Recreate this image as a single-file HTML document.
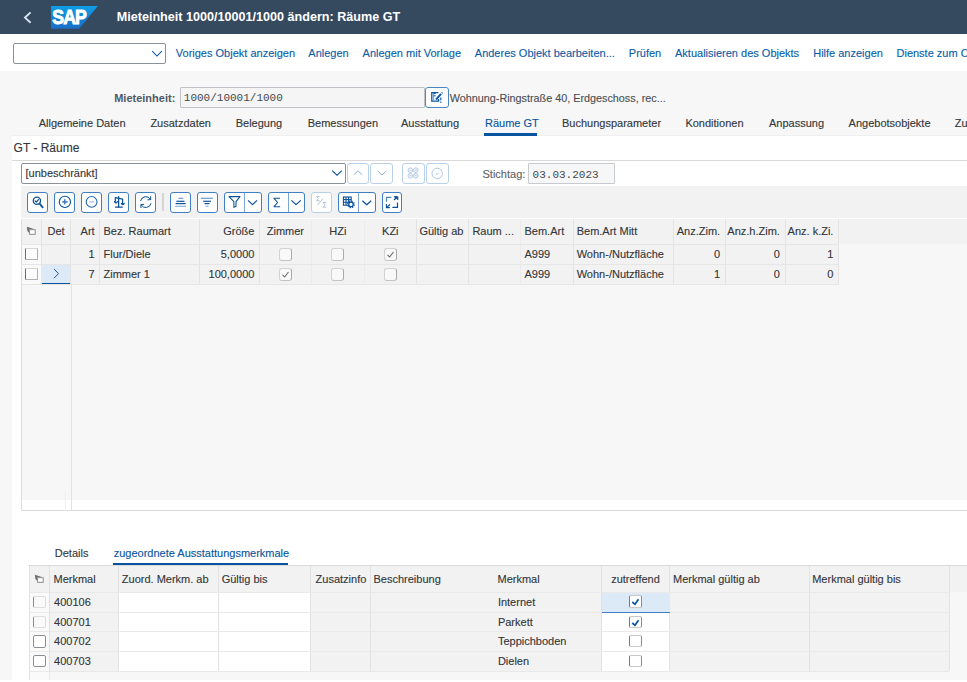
<!DOCTYPE html><html><head><meta charset="utf-8"><style>html,body{margin:0;padding:0;width:967px;height:682px;overflow:hidden;position:relative}</style></head><body><div style="position:absolute;left:0px;top:0px;width:967px;height:682px;background:#f7f7f7"></div>
<div style="position:absolute;left:0px;top:0px;width:967px;height:34px;background:#354a5f"></div>
<svg style="position:absolute;left:22px;top:10px;" width="12" height="16" viewBox="0 0 12 16"><polyline points="8.6,2.4 3,7.6 8.6,12.8" fill="none" stroke="#d8e6f3" stroke-width="1.9"/></svg>
<svg style="position:absolute;left:51px;top:6px;" width="48" height="23" viewBox="0 0 48 23"><defs><linearGradient id="g" x1="0" y1="0" x2="0" y2="1"><stop offset="0" stop-color="#0d9fe6"/><stop offset="1" stop-color="#1b6cc6"/></linearGradient></defs><polygon points="0,0 46.8,0 28.2,22.8 0,22.8" fill="url(#g)"/><text x="1.3" y="18.2" textLength="33.6" lengthAdjust="spacingAndGlyphs" font-family="Liberation Sans" font-weight="700" font-size="19.5" fill="#fff" stroke="#fff" stroke-width="0.9" letter-spacing="-1">SAP</text></svg>
<div style="position:absolute;left:116.70px;top:10.73px;font:700 12.6px/12.6px 'Liberation Sans', sans-serif;color:#fff;white-space:nowrap;">Mieteinheit 1000/10001/1000 ändern: Räume GT</div>
<div style="position:absolute;left:0px;top:34px;width:967px;height:37px;background:#fff"></div>
<div style="position:absolute;left:13px;top:43px;width:153px;height:21px;border:1px solid #89919a;border-radius:2px;background:#fff;box-sizing:border-box"></div>
<svg style="position:absolute;left:151px;top:50px;" width="12" height="8" viewBox="0 0 12 8"><polyline points="1.2,1.2 6,6 10.8,1.2" fill="none" stroke="#0854a0" stroke-width="1.05"/></svg>
<div style="position:absolute;left:175.80px;top:47.69px;font:400 11px/11px 'Liberation Sans', sans-serif;color:#0a5ca8;white-space:nowrap;-webkit-text-stroke:0.12px currentColor;">Voriges Objekt anzeigen</div>
<div style="position:absolute;left:308.30px;top:47.69px;font:400 11px/11px 'Liberation Sans', sans-serif;color:#0a5ca8;white-space:nowrap;-webkit-text-stroke:0.12px currentColor;">Anlegen</div>
<div style="position:absolute;left:362.60px;top:47.69px;font:400 11px/11px 'Liberation Sans', sans-serif;color:#0a5ca8;white-space:nowrap;-webkit-text-stroke:0.12px currentColor;">Anlegen mit Vorlage</div>
<div style="position:absolute;left:474.80px;top:47.69px;font:400 11px/11px 'Liberation Sans', sans-serif;color:#0a5ca8;white-space:nowrap;-webkit-text-stroke:0.12px currentColor;">Anderes Objekt bearbeiten...</div>
<div style="position:absolute;left:628.80px;top:47.69px;font:400 11px/11px 'Liberation Sans', sans-serif;color:#0a5ca8;white-space:nowrap;-webkit-text-stroke:0.12px currentColor;">Prüfen</div>
<div style="position:absolute;left:675.00px;top:47.69px;font:400 11px/11px 'Liberation Sans', sans-serif;color:#0a5ca8;white-space:nowrap;-webkit-text-stroke:0.12px currentColor;">Aktualisieren des Objekts</div>
<div style="position:absolute;left:813.20px;top:47.69px;font:400 11px/11px 'Liberation Sans', sans-serif;color:#0a5ca8;white-space:nowrap;-webkit-text-stroke:0.12px currentColor;">Hilfe anzeigen</div>
<div style="position:absolute;left:896.50px;top:47.69px;font:400 11px/11px 'Liberation Sans', sans-serif;color:#0a5ca8;white-space:nowrap;-webkit-text-stroke:0.12px currentColor;">Dienste zum Objekt</div>
<div style="position:absolute;right:791.70px;top:92.59px;font:700 11px/11px 'Liberation Sans', sans-serif;color:#4f5a66;white-space:nowrap;">Mieteinheit:</div>
<div style="position:absolute;left:179.5px;top:87.2px;width:245.5px;height:20.799999999999997px;border:1px solid #bfc3c7;background:#f5f5f5;box-sizing:border-box;border-radius:1px"></div>
<div style="position:absolute;left:183.80px;top:93.07px;font:400 11px/11px 'Liberation Mono', monospace;color:#45494d;white-space:nowrap;">1000/10001/1000</div>
<div style="position:absolute;left:425px;top:87px;width:24px;height:21px;border:1px solid #4a86c8;background:#fff;box-sizing:border-box;border-radius:3px"></div>
<svg style="position:absolute;left:425px;top:87px;" width="24" height="21" viewBox="0 0 24 21"><g fill="none" stroke="#0b57a6" stroke-linecap="butt"><polyline points="13.4,5.6 6.8,5.6 6.8,14.2 13.6,14.2 13.6,12" stroke-width="1.3"/><line x1="8.4" y1="6.5" x2="10.6" y2="6.5" stroke-width="1.1"/><line x1="8.4" y1="8.8" x2="10.6" y2="8.8" stroke-width="1.1"/><line x1="8.6" y1="6" x2="8.6" y2="13" stroke-width="0.9" stroke="#5a8fcc"/><line x1="11" y1="12.6" x2="16" y2="6.8" stroke-width="2"/><line x1="16.6" y1="5.4" x2="17.6" y2="6.4" stroke-width="1.2"/><line x1="15.8" y1="10.4" x2="15.8" y2="13.2" stroke-width="1.2"/><line x1="15.8" y1="14.6" x2="15.8" y2="15.8" stroke-width="1.3"/></g></svg>
<div style="position:absolute;left:449.80px;top:92.56px;font:400 10.8px/10.8px 'Liberation Sans', sans-serif;color:#4a4e52;white-space:nowrap;-webkit-text-stroke:0.12px currentColor;">Wohnung-Ringstraße 40, Erdgeschoss, rec...</div>
<div style="position:absolute;left:38.70px;top:117.99px;font:400 11px/11px 'Liberation Sans', sans-serif;color:#32363a;white-space:nowrap;-webkit-text-stroke:0.12px currentColor;">Allgemeine Daten</div>
<div style="position:absolute;left:150.40px;top:117.99px;font:400 11px/11px 'Liberation Sans', sans-serif;color:#32363a;white-space:nowrap;-webkit-text-stroke:0.12px currentColor;">Zusatzdaten</div>
<div style="position:absolute;left:235.70px;top:117.99px;font:400 11px/11px 'Liberation Sans', sans-serif;color:#32363a;white-space:nowrap;-webkit-text-stroke:0.12px currentColor;">Belegung</div>
<div style="position:absolute;left:307.70px;top:117.99px;font:400 11px/11px 'Liberation Sans', sans-serif;color:#32363a;white-space:nowrap;-webkit-text-stroke:0.12px currentColor;">Bemessungen</div>
<div style="position:absolute;left:401.00px;top:117.99px;font:400 11px/11px 'Liberation Sans', sans-serif;color:#32363a;white-space:nowrap;-webkit-text-stroke:0.12px currentColor;">Ausstattung</div>
<div style="position:absolute;left:485.00px;top:117.99px;font:400 11px/11px 'Liberation Sans', sans-serif;color:#0854a0;white-space:nowrap;-webkit-text-stroke:0.12px currentColor;">Räume GT</div>
<div style="position:absolute;left:562.00px;top:117.99px;font:400 11px/11px 'Liberation Sans', sans-serif;color:#32363a;white-space:nowrap;-webkit-text-stroke:0.12px currentColor;">Buchungsparameter</div>
<div style="position:absolute;left:685.40px;top:117.99px;font:400 11px/11px 'Liberation Sans', sans-serif;color:#32363a;white-space:nowrap;-webkit-text-stroke:0.12px currentColor;">Konditionen</div>
<div style="position:absolute;left:769.00px;top:117.99px;font:400 11px/11px 'Liberation Sans', sans-serif;color:#32363a;white-space:nowrap;-webkit-text-stroke:0.12px currentColor;">Anpassung</div>
<div style="position:absolute;left:848.60px;top:117.99px;font:400 11px/11px 'Liberation Sans', sans-serif;color:#32363a;white-space:nowrap;-webkit-text-stroke:0.12px currentColor;">Angebotsobjekte</div>
<div style="position:absolute;left:954.80px;top:117.99px;font:400 11px/11px 'Liberation Sans', sans-serif;color:#32363a;white-space:nowrap;-webkit-text-stroke:0.12px currentColor;">Zusatz</div>
<div style="position:absolute;left:12.4px;top:134.5px;width:954.6px;height:1.0px;background:#efefef"></div>
<div style="position:absolute;left:484px;top:133px;width:53px;height:2.5px;background:#0854a0"></div>
<div style="position:absolute;left:12.4px;top:135.5px;width:954.6px;height:546.5px;background:#fff"></div>
<div style="position:absolute;left:13.60px;top:142.14px;font:400 12px/12px 'Liberation Sans', sans-serif;color:#32363a;white-space:nowrap;-webkit-text-stroke:0.12px currentColor;">GT - Räume</div>
<div style="position:absolute;left:12.4px;top:160px;width:954.6px;height:1px;background:#d9d9d9"></div>
<div style="position:absolute;left:21.2px;top:163px;width:324.8px;height:20.5px;border:1px solid #89919a;border-radius:2px;background:#fff;box-sizing:border-box"></div>
<div style="position:absolute;left:25.50px;top:168.09px;font:400 11px/11px 'Liberation Sans', sans-serif;color:#32363a;white-space:nowrap;-webkit-text-stroke:0.12px currentColor;">[unbeschränkt]</div>
<svg style="position:absolute;left:331px;top:169px;" width="12" height="8" viewBox="0 0 12 8"><polyline points="1.2,1.6 6,6.2 10.8,1.6" fill="none" stroke="#0854a0" stroke-width="1.05"/></svg>
<div style="position:absolute;left:346.8px;top:163px;width:22.19999999999999px;height:21px;border:1px solid #b8d0ea;border-radius:3px;background:#fff;box-sizing:border-box"></div>
<div style="position:absolute;left:370px;top:163px;width:23px;height:21px;border:1px solid #b8d0ea;border-radius:3px;background:#fff;box-sizing:border-box"></div>
<div style="position:absolute;left:401.5px;top:163px;width:23.0px;height:21px;border:1px solid #b8d0ea;border-radius:3px;background:#fff;box-sizing:border-box"></div>
<div style="position:absolute;left:426px;top:163px;width:22.600000000000023px;height:21px;border:1px solid #b8d0ea;border-radius:3px;background:#fff;box-sizing:border-box"></div>
<svg style="position:absolute;left:352px;top:168px;" width="12" height="10" viewBox="0 0 12 10"><polyline points="1.8,6.8 6,2.8 10.2,6.8" fill="none" stroke="#8fb2d8" stroke-width="1"/></svg>
<svg style="position:absolute;left:375.5px;top:168px;" width="12" height="10" viewBox="0 0 12 10"><polyline points="1.8,3 6,7 10.2,3" fill="none" stroke="#8fb2d8" stroke-width="1"/></svg>
<svg style="position:absolute;left:406px;top:166px;" width="14" height="14" viewBox="0 0 14 14"><g fill="none" stroke="#a9c1dc" stroke-width="0.9"><circle cx="4.3" cy="4.2" r="2.3"/><circle cx="9.8" cy="4.2" r="2.3"/><circle cx="4.3" cy="9.8" r="2.3"/><circle cx="9.8" cy="9.8" r="2.3"/><path d="M3.2,4.2h2.2M8.7,4.2h2.2M3.2,9.8h2.2M8.7,9.8h2.2"/></g></svg>
<svg style="position:absolute;left:430px;top:166px;" width="14" height="14" viewBox="0 0 14 14"><g fill="none" stroke="#a9c1dc" stroke-width="0.9"><circle cx="7.2" cy="7.4" r="5.2"/><path d="M6,7.6 l1.2,1 l1.4,-1.6"/></g></svg>
<div style="position:absolute;left:482.50px;top:168.99px;font:400 11px/11px 'Liberation Sans', sans-serif;color:#5f6366;white-space:nowrap;-webkit-text-stroke:0.12px currentColor;">Stichtag:</div>
<div style="position:absolute;left:528.3px;top:163.3px;width:86.70000000000005px;height:20.399999999999977px;border:1px solid #c6cbd0;background:#f7f7f7;box-sizing:border-box;border-radius:1px"></div>
<div style="position:absolute;left:532.60px;top:169.87px;font:400 11px/11px 'Liberation Mono', monospace;color:#45494d;white-space:nowrap;">03.03.2023</div>
<div style="position:absolute;left:21.2px;top:185.5px;width:945.8px;height:33.0px;background:#f2f2f2"></div>
<div style="position:absolute;left:27.3px;top:192.1px;width:20.7px;height:20.5px;border:1px solid #3f7fc4;border-radius:3px;background:#fff;box-sizing:border-box"></div>
<div style="position:absolute;left:54.1px;top:192.1px;width:20.6px;height:20.5px;border:1px solid #3f7fc4;border-radius:3px;background:#fff;box-sizing:border-box"></div>
<div style="position:absolute;left:81px;top:192.1px;width:20.700000000000003px;height:20.5px;border:1px solid #3f7fc4;border-radius:3px;background:#fff;box-sizing:border-box"></div>
<div style="position:absolute;left:108px;top:192.1px;width:20.599999999999994px;height:20.5px;border:1px solid #3f7fc4;border-radius:3px;background:#fff;box-sizing:border-box"></div>
<div style="position:absolute;left:135.1px;top:192.1px;width:20.599999999999994px;height:20.5px;border:1px solid #3f7fc4;border-radius:3px;background:#fff;box-sizing:border-box"></div>
<div style="position:absolute;left:170.1px;top:192.1px;width:20.599999999999994px;height:20.5px;border:1px solid #3f7fc4;border-radius:3px;background:#fff;box-sizing:border-box"></div>
<div style="position:absolute;left:197.2px;top:192.1px;width:20.5px;height:20.5px;border:1px solid #3f7fc4;border-radius:3px;background:#fff;box-sizing:border-box"></div>
<div style="position:absolute;left:224.1px;top:192.1px;width:37.50000000000003px;height:20.5px;border:1px solid #3f7fc4;border-radius:3px;background:#fff;box-sizing:border-box"></div>
<div style="position:absolute;left:267.8px;top:192.1px;width:37.19999999999999px;height:20.5px;border:1px solid #3f7fc4;border-radius:3px;background:#fff;box-sizing:border-box"></div>
<div style="position:absolute;left:338px;top:192.1px;width:37.69999999999999px;height:20.5px;border:1px solid #3f7fc4;border-radius:3px;background:#fff;box-sizing:border-box"></div>
<div style="position:absolute;left:381.9px;top:192.1px;width:20.5px;height:20.5px;border:1px solid #3f7fc4;border-radius:3px;background:#fff;box-sizing:border-box"></div>
<div style="position:absolute;left:311.2px;top:192.1px;width:20.600000000000023px;height:20.5px;border:1px solid #b8d0ea;border-radius:3px;background:#fff;box-sizing:border-box"></div>
<div style="position:absolute;left:244.0px;top:193px;width:1.0px;height:19px;background:#7aa5d6"></div>
<div style="position:absolute;left:287.9px;top:193px;width:1.0px;height:19px;background:#7aa5d6"></div>
<div style="position:absolute;left:358.1px;top:193px;width:1.0px;height:19px;background:#7aa5d6"></div>
<div style="position:absolute;left:162.3px;top:193px;width:1.6999999999999886px;height:18px;background:#d5d5d5"></div>
<svg style="position:absolute;left:0px;top:0px;pointer-events:none;z-index:5" width="967" height="682" viewBox="0 0 967 682">
<g fill="none" stroke="#0b5299" stroke-width="1.3" stroke-linecap="round" stroke-linejoin="round">
<circle cx="36.9" cy="200.8" r="3.6"/>
<line x1="39.6" y1="203.6" x2="42.7" y2="207.3" stroke-width="1.8"/>
<polyline points="35.2,201 36.4,202.2 38.4,199.6" stroke-width="1.2"/>
</g>
<g fill="none" stroke="#0b5299" stroke-width="1.1">
<circle cx="64.9" cy="201.9" r="5.6"/>
<line x1="62.3" y1="201.9" x2="67.6" y2="201.9" stroke-width="1.6" stroke="#3d7cc0"/>
<line x1="64.7" y1="199.2" x2="64.7" y2="204.4" stroke-width="1.6" stroke="#3d7cc0"/>
<circle cx="91.6" cy="201.9" r="5.4" stroke="#1f68b3"/>
<line x1="89.2" y1="201.9" x2="94" y2="201.9" stroke="#8fb0d6" stroke-width="1"/>
</g>
<g fill="none" stroke="#0b5299" stroke-width="1.3" stroke-linecap="round">
<line x1="118.6" y1="196.6" x2="118.6" y2="207"/>
<line x1="115.6" y1="207.2" x2="122.2" y2="207.2"/>
<line x1="115.4" y1="197.6" x2="122.6" y2="199.2"/>
<path d="M115.3,198.2 L115.3,201.8 M114.6,201.6 Q116,204 117.4,201.6" stroke-width="1.2"/>
<path d="M122.6,199.6 L122.6,203.6 M121.4,203.4 Q122.8,206 124.2,203.4" stroke-width="1.2"/>
</g>
<g fill="none" stroke="#0b5299" stroke-width="1.0" stroke-linecap="round">
<path d="M140.6,200.6 A5.4,5.4 0 0 1 150.4,199.2"/>
<polyline points="150.6,196.6 150.8,199.6 147.9,199.8"/>
<path d="M151,203.6 A5.4,5.4 0 0 1 141.2,205"/>
<polyline points="141,207.6 140.8,204.6 143.7,204.4"/>
</g>
<g stroke="#0b5299" stroke-width="1.2">
<line x1="178.4" y1="198.3" x2="183.2" y2="198.3" stroke="#6c9bd0"/>
<line x1="176.4" y1="201.3" x2="184.5" y2="201.3"/>
<line x1="175.6" y1="203.6" x2="185.6" y2="203.6"/>
<line x1="175" y1="206.3" x2="186" y2="206.3" stroke="#8db1da"/>
<line x1="200.9" y1="198.3" x2="213" y2="198.3" stroke="#6c9bd0"/>
<line x1="203.2" y1="201.3" x2="211" y2="201.3"/>
<line x1="204.5" y1="203.6" x2="209.5" y2="203.6"/>
<line x1="205.5" y1="206.3" x2="208.5" y2="206.3" stroke="#8db1da"/>
</g>
<g fill="none" stroke="#0b5299" stroke-width="1.05" stroke-linejoin="round">
<path d="M229,196.6 L240,196.6 L236,201.6 L236,206.2 L233.9,207.4 L233.9,201.6 Z"/>
<polyline points="248,200.4 252.5,204.6 257,200.4" stroke-width="1.2"/>
<path d="M280,198.3 L274,198.3 L277.6,202.5 L274,206.7 L280.2,206.7"/>
<polyline points="291.4,200.4 296,204.6 300.8,200.4" stroke-width="1.2"/>
<polyline points="362.4,200.8 366.8,204.8 371.2,200.8" stroke-width="1.2"/>
</g>
<g fill="none" stroke="#a8bdd4" stroke-width="0.9">
<polyline points="319.8,196.4 316.6,196.4 318.4,198.6 316.6,200.8 319.8,200.8"/>
<line x1="317.4" y1="205.4" x2="322.8" y2="198.8"/>
<polyline points="326.4,202.6 323.2,202.6 325,204.8 323.2,207.2 326.4,207.2"/>
</g>
<g fill="none" stroke="#0b5299" stroke-width="1.1">
<rect x="343.4" y="197" width="7.8" height="8.2"/>
<line x1="343.4" y1="199.6" x2="351.2" y2="199.6"/>
<line x1="343.4" y1="202.3" x2="349" y2="202.3"/>
<line x1="346" y1="197" x2="346" y2="205.2"/>
<line x1="348.6" y1="197" x2="348.6" y2="202"/>
<circle cx="351" cy="204.4" r="2.2" fill="#fff" stroke-width="1.3"/>
<circle cx="351" cy="204.4" r="3.3" stroke-dasharray="1.3 1.3" stroke-width="1.2"/>
</g>
<g fill="none" stroke="#0b5299" stroke-width="1.2" stroke-linecap="butt">
<polyline points="386.5,201.8 386.5,197.3 391.4,197.3" stroke="#4a86c6"/>
<polyline points="397.5,202.6 397.5,207.4 392.4,207.4"/>
<line x1="394" y1="200" x2="397" y2="197"/>
<polyline points="393.8,196.7 397.8,196.7 397.8,200" fill="#0b5299" stroke-width="1"/>
<line x1="390" y1="204.4" x2="387" y2="207.3"/>
<polyline points="386.4,204 386.4,207.6 389.8,207.6" stroke-width="1.1"/>
</g>
</svg>
<div style="position:absolute;left:21.3px;top:218.5px;width:945.7px;height:25.80000000000001px;background:#f2f2f2"></div>
<div style="position:absolute;left:21.3px;top:244.3px;width:945.7px;height:256.2px;background:#f7f7f7"></div>
<div style="position:absolute;left:21.3px;top:244.3px;width:817.3000000000001px;height:39.89999999999998px;background:#f2f2f2"></div>
<div style="position:absolute;left:21.3px;top:244.3px;width:19.999999999999996px;height:39.89999999999998px;background:#fafafa"></div>
<div style="position:absolute;left:21.3px;top:500.5px;width:945.7px;height:10.5px;background:#fff;border-bottom:1px solid #d9d9d9;box-sizing:border-box"></div>
<div style="position:absolute;left:20.6px;top:218.5px;width:1.0px;height:292.5px;background:#dedede"></div>
<div style="position:absolute;left:40.8px;top:218.5px;width:1.0px;height:65.69999999999999px;background:#e3e3e3"></div>
<div style="position:absolute;left:70.4px;top:218.5px;width:1.0px;height:65.69999999999999px;background:#e3e3e3"></div>
<div style="position:absolute;left:98.9px;top:218.5px;width:1.0px;height:65.69999999999999px;background:#e3e3e3"></div>
<div style="position:absolute;left:198.7px;top:218.5px;width:1.0px;height:65.69999999999999px;background:#e3e3e3"></div>
<div style="position:absolute;left:258.9px;top:218.5px;width:1.0px;height:65.69999999999999px;background:#e3e3e3"></div>
<div style="position:absolute;left:311.0px;top:218.5px;width:1.0px;height:65.69999999999999px;background:#ebebeb"></div>
<div style="position:absolute;left:363.9px;top:218.5px;width:1.0px;height:65.69999999999999px;background:#ebebeb"></div>
<div style="position:absolute;left:415.8px;top:218.5px;width:1.0px;height:65.69999999999999px;background:#e3e3e3"></div>
<div style="position:absolute;left:467.9px;top:218.5px;width:1.0px;height:65.69999999999999px;background:#e3e3e3"></div>
<div style="position:absolute;left:519.5px;top:218.5px;width:1.0px;height:65.69999999999999px;background:#ebebeb"></div>
<div style="position:absolute;left:572.5px;top:218.5px;width:1.0px;height:65.69999999999999px;background:#e3e3e3"></div>
<div style="position:absolute;left:673.0px;top:218.5px;width:1.0px;height:65.69999999999999px;background:#e3e3e3"></div>
<div style="position:absolute;left:724.8px;top:218.5px;width:1.0px;height:65.69999999999999px;background:#e3e3e3"></div>
<div style="position:absolute;left:785.1px;top:218.5px;width:1.0px;height:65.69999999999999px;background:#e3e3e3"></div>
<div style="position:absolute;left:838.1px;top:218.5px;width:1.0px;height:65.69999999999999px;background:#e3e3e3"></div>
<div style="position:absolute;left:21.3px;top:218.0px;width:945.7px;height:1.0px;background:#fff"></div>
<div style="position:absolute;left:70.5px;top:284.2px;width:1.0px;height:226.8px;background:#e2e2e2"></div>
<div style="position:absolute;left:65.3px;top:490px;width:1.0px;height:21px;background:#f0f0f0"></div>
<div style="position:absolute;left:21.3px;top:243.8px;width:817.3000000000001px;height:1.0px;background:#e6e6e6"></div>
<div style="position:absolute;left:21.3px;top:263.9px;width:817.3000000000001px;height:1.0px;background:#e6e6e6"></div>
<div style="position:absolute;left:21.3px;top:283.7px;width:817.3000000000001px;height:1.0px;background:#e6e6e6"></div>
<div style="position:absolute;left:47.50px;top:225.99px;font:400 11px/11px 'Liberation Sans', sans-serif;color:#32363a;white-space:nowrap;-webkit-text-stroke:0.12px currentColor;">Det</div>
<div style="position:absolute;right:872.40px;top:225.99px;font:400 11px/11px 'Liberation Sans', sans-serif;color:#32363a;white-space:nowrap;-webkit-text-stroke:0.12px currentColor;">Art</div>
<div style="position:absolute;left:103.50px;top:225.99px;font:400 11px/11px 'Liberation Sans', sans-serif;color:#32363a;white-space:nowrap;-webkit-text-stroke:0.12px currentColor;">Bez. Raumart</div>
<div style="position:absolute;right:712.60px;top:225.99px;font:400 11px/11px 'Liberation Sans', sans-serif;color:#32363a;white-space:nowrap;-webkit-text-stroke:0.12px currentColor;">Größe</div>
<div style="position:absolute;left:-14.60px;width:600px;text-align:center;top:225.99px;font:400 11px/11px 'Liberation Sans', sans-serif;color:#32363a;white-space:nowrap;-webkit-text-stroke:0.12px currentColor;">Zimmer</div>
<div style="position:absolute;left:37.90px;width:600px;text-align:center;top:225.99px;font:400 11px/11px 'Liberation Sans', sans-serif;color:#32363a;white-space:nowrap;-webkit-text-stroke:0.12px currentColor;">HZi</div>
<div style="position:absolute;left:90.30px;width:600px;text-align:center;top:225.99px;font:400 11px/11px 'Liberation Sans', sans-serif;color:#32363a;white-space:nowrap;-webkit-text-stroke:0.12px currentColor;">KZi</div>
<div style="position:absolute;left:419.40px;top:225.99px;font:400 11px/11px 'Liberation Sans', sans-serif;color:#32363a;white-space:nowrap;-webkit-text-stroke:0.12px currentColor;">Gültig ab</div>
<div style="position:absolute;left:472.40px;top:225.99px;font:400 11px/11px 'Liberation Sans', sans-serif;color:#32363a;white-space:nowrap;-webkit-text-stroke:0.12px currentColor;">Raum ...</div>
<div style="position:absolute;left:524.50px;top:225.99px;font:400 11px/11px 'Liberation Sans', sans-serif;color:#32363a;white-space:nowrap;-webkit-text-stroke:0.12px currentColor;">Bem.Art</div>
<div style="position:absolute;left:576.70px;top:225.99px;font:400 11px/11px 'Liberation Sans', sans-serif;color:#32363a;white-space:nowrap;-webkit-text-stroke:0.12px currentColor;">Bem.Art Mitt</div>
<div style="position:absolute;right:246.90px;top:225.99px;font:400 11px/11px 'Liberation Sans', sans-serif;color:#32363a;white-space:nowrap;-webkit-text-stroke:0.12px currentColor;">Anz.Zim.</div>
<div style="position:absolute;right:187.10px;top:225.99px;font:400 11px/11px 'Liberation Sans', sans-serif;color:#32363a;white-space:nowrap;-webkit-text-stroke:0.12px currentColor;">Anz.h.Zim.</div>
<div style="position:absolute;right:133.60px;top:225.99px;font:400 11px/11px 'Liberation Sans', sans-serif;color:#32363a;white-space:nowrap;-webkit-text-stroke:0.12px currentColor;">Anz. k.Zi.</div>
<svg style="position:absolute;left:25px;top:225px;" width="12" height="12" viewBox="0 0 12 12"><polygon points="1.8,1.8 5,2.8 9.6,4.3 4.2,4.3 4.2,8 2.4,6" fill="#6e6e6e"/><rect x="4.6" y="4.7" width="5.6" height="4.6" fill="#fff" stroke="#8a8a8a" stroke-width="1"/></svg>
<div style="position:absolute;right:872.40px;top:248.79px;font:400 11px/11px 'Liberation Sans', sans-serif;color:#32363a;white-space:nowrap;-webkit-text-stroke:0.12px currentColor;">1</div>
<div style="position:absolute;left:103.50px;top:248.79px;font:400 11px/11px 'Liberation Sans', sans-serif;color:#32363a;white-space:nowrap;-webkit-text-stroke:0.12px currentColor;">Flur/Diele</div>
<div style="position:absolute;right:712.60px;top:248.79px;font:400 11px/11px 'Liberation Sans', sans-serif;color:#32363a;white-space:nowrap;-webkit-text-stroke:0.12px currentColor;">5,0000</div>
<div style="position:absolute;left:524.50px;top:248.79px;font:400 11px/11px 'Liberation Sans', sans-serif;color:#32363a;white-space:nowrap;-webkit-text-stroke:0.12px currentColor;">A999</div>
<div style="position:absolute;left:576.70px;top:248.79px;font:400 11px/11px 'Liberation Sans', sans-serif;color:#32363a;white-space:nowrap;-webkit-text-stroke:0.12px currentColor;">Wohn-/Nutzfläche</div>
<div style="position:absolute;right:246.90px;top:248.79px;font:400 11px/11px 'Liberation Sans', sans-serif;color:#32363a;white-space:nowrap;-webkit-text-stroke:0.12px currentColor;">0</div>
<div style="position:absolute;right:187.10px;top:248.79px;font:400 11px/11px 'Liberation Sans', sans-serif;color:#32363a;white-space:nowrap;-webkit-text-stroke:0.12px currentColor;">0</div>
<div style="position:absolute;right:133.60px;top:248.79px;font:400 11px/11px 'Liberation Sans', sans-serif;color:#32363a;white-space:nowrap;-webkit-text-stroke:0.12px currentColor;">1</div>
<div style="position:absolute;left:25.1px;top:247.9px;width:12.799999999999997px;height:12.400000000000006px;border:1px solid #b0b0b0;border-left-color:#6e6e6e;border-top-color:#d6d6d6;border-radius:1px;background:#fcfcfc;box-sizing:border-box"></div>
<div style="position:absolute;left:278.9px;top:247.70000000000002px;width:13.0px;height:12.999999999999972px;border:1px solid #d2d2d2;border-right-color:#a9a9a9;border-bottom-color:#c4c4c4;border-radius:3px;background:#f9f9f9;box-sizing:border-box"></div>
<div style="position:absolute;left:331.4px;top:247.70000000000002px;width:13.0px;height:12.999999999999972px;border:1px solid #d2d2d2;border-right-color:#a9a9a9;border-bottom-color:#c4c4c4;border-radius:3px;background:#f9f9f9;box-sizing:border-box"></div>
<div style="position:absolute;left:383.8px;top:247.70000000000002px;width:13.0px;height:12.999999999999972px;border:1px solid #d2d2d2;border-right-color:#a9a9a9;border-bottom-color:#c4c4c4;border-radius:3px;background:#f9f9f9;box-sizing:border-box"></div>
<svg style="position:absolute;left:383.8px;top:247.70000000000002px;" width="13" height="13" viewBox="0 0 13 13"><polyline points="3.5,6.8 5.6,9 9.5,4" fill="none" stroke="#6a6d70" stroke-width="1.1"/></svg>
<div style="position:absolute;right:872.40px;top:268.79px;font:400 11px/11px 'Liberation Sans', sans-serif;color:#32363a;white-space:nowrap;-webkit-text-stroke:0.12px currentColor;">7</div>
<div style="position:absolute;left:103.50px;top:268.79px;font:400 11px/11px 'Liberation Sans', sans-serif;color:#32363a;white-space:nowrap;-webkit-text-stroke:0.12px currentColor;">Zimmer 1</div>
<div style="position:absolute;right:712.60px;top:268.79px;font:400 11px/11px 'Liberation Sans', sans-serif;color:#32363a;white-space:nowrap;-webkit-text-stroke:0.12px currentColor;">100,0000</div>
<div style="position:absolute;left:524.50px;top:268.79px;font:400 11px/11px 'Liberation Sans', sans-serif;color:#32363a;white-space:nowrap;-webkit-text-stroke:0.12px currentColor;">A999</div>
<div style="position:absolute;left:576.70px;top:268.79px;font:400 11px/11px 'Liberation Sans', sans-serif;color:#32363a;white-space:nowrap;-webkit-text-stroke:0.12px currentColor;">Wohn-/Nutzfläche</div>
<div style="position:absolute;right:246.90px;top:268.79px;font:400 11px/11px 'Liberation Sans', sans-serif;color:#32363a;white-space:nowrap;-webkit-text-stroke:0.12px currentColor;">1</div>
<div style="position:absolute;right:187.10px;top:268.79px;font:400 11px/11px 'Liberation Sans', sans-serif;color:#32363a;white-space:nowrap;-webkit-text-stroke:0.12px currentColor;">0</div>
<div style="position:absolute;right:133.60px;top:268.79px;font:400 11px/11px 'Liberation Sans', sans-serif;color:#32363a;white-space:nowrap;-webkit-text-stroke:0.12px currentColor;">0</div>
<div style="position:absolute;left:25.1px;top:268.0px;width:12.799999999999997px;height:12.399999999999977px;border:1px solid #b0b0b0;border-left-color:#6e6e6e;border-top-color:#d6d6d6;border-radius:1px;background:#fcfcfc;box-sizing:border-box"></div>
<div style="position:absolute;left:278.9px;top:267.79999999999995px;width:13.0px;height:13.0px;border:1px solid #d2d2d2;border-right-color:#a9a9a9;border-bottom-color:#c4c4c4;border-radius:3px;background:#f9f9f9;box-sizing:border-box"></div>
<svg style="position:absolute;left:278.9px;top:267.79999999999995px;" width="13" height="13" viewBox="0 0 13 13"><polyline points="3.5,6.8 5.6,9 9.5,4" fill="none" stroke="#6a6d70" stroke-width="1.1"/></svg>
<div style="position:absolute;left:331.4px;top:267.79999999999995px;width:13.0px;height:13.0px;border:1px solid #d2d2d2;border-right-color:#a9a9a9;border-bottom-color:#c4c4c4;border-radius:3px;background:#f9f9f9;box-sizing:border-box"></div>
<div style="position:absolute;left:383.8px;top:267.79999999999995px;width:13.0px;height:13.0px;border:1px solid #d2d2d2;border-right-color:#a9a9a9;border-bottom-color:#c4c4c4;border-radius:3px;background:#f9f9f9;box-sizing:border-box"></div>
<div style="position:absolute;left:41.3px;top:264.9px;width:29.200000000000003px;height:19.30000000000001px;background:#dce9f6"></div>
<div style="position:absolute;left:41.6px;top:282.7px;width:28.699999999999996px;height:1.6000000000000227px;background:#0854a0"></div>
<svg style="position:absolute;left:50px;top:266px;" width="12" height="14" viewBox="0 0 12 14"><polyline points="4,3 8.5,7.6 4,12.2" fill="none" stroke="#1b4f8a" stroke-width="0.95"/></svg>
<div style="position:absolute;left:54.80px;top:548.19px;font:400 11px/11px 'Liberation Sans', sans-serif;color:#32363a;white-space:nowrap;-webkit-text-stroke:0.12px currentColor;">Details</div>
<div style="position:absolute;left:113.70px;top:548.19px;font:400 11px/11px 'Liberation Sans', sans-serif;color:#0854a0;white-space:nowrap;-webkit-text-stroke:0.12px currentColor;">zugeordnete Ausstattungsmerkmale</div>
<div style="position:absolute;left:113px;top:563.3px;width:175.39999999999998px;height:2.300000000000068px;background:#0854a0"></div>
<div style="position:absolute;left:29.3px;top:565.6px;width:937.7px;height:26.600000000000023px;background:#f2f2f2"></div>
<div style="position:absolute;left:28.8px;top:565.0px;width:938.2px;height:1.0px;background:#d9d9d9"></div>
<div style="position:absolute;left:29.3px;top:592.2px;width:937.7px;height:89.79999999999995px;background:#f7f7f7"></div>
<div style="position:absolute;left:29.3px;top:592.2px;width:20.3px;height:87.79999999999995px;background:#fafafa"></div>
<div style="position:absolute;left:49.6px;top:592.2px;width:68.9px;height:79.0px;background:#f2f2f2"></div>
<div style="position:absolute;left:118.5px;top:592.2px;width:191.5px;height:79.0px;background:#fff"></div>
<div style="position:absolute;left:310.0px;top:592.2px;width:291.6px;height:79.0px;background:#f2f2f2"></div>
<div style="position:absolute;left:601.6px;top:592.2px;width:68.29999999999995px;height:79.0px;background:#fff"></div>
<div style="position:absolute;left:669.9px;top:592.2px;width:279.6px;height:79.0px;background:#f2f2f2"></div>
<div style="position:absolute;left:28.8px;top:565.6px;width:1.0px;height:116.39999999999998px;background:#e0e0e0"></div>
<div style="position:absolute;left:49.1px;top:565.6px;width:1.0px;height:105.60000000000002px;background:#e2e2e2"></div>
<div style="position:absolute;left:118.0px;top:565.6px;width:1.0px;height:105.60000000000002px;background:#e2e2e2"></div>
<div style="position:absolute;left:218.1px;top:565.6px;width:1.0px;height:105.60000000000002px;background:#e2e2e2"></div>
<div style="position:absolute;left:309.5px;top:565.6px;width:1.0px;height:105.60000000000002px;background:#e2e2e2"></div>
<div style="position:absolute;left:370.0px;top:565.6px;width:1.0px;height:105.60000000000002px;background:#e2e2e2"></div>
<div style="position:absolute;left:601.1px;top:565.6px;width:1.0px;height:105.60000000000002px;background:#e2e2e2"></div>
<div style="position:absolute;left:669.4px;top:565.6px;width:1.0px;height:105.60000000000002px;background:#e2e2e2"></div>
<div style="position:absolute;left:809.0px;top:565.6px;width:1.0px;height:105.60000000000002px;background:#e2e2e2"></div>
<div style="position:absolute;left:949.0px;top:565.6px;width:1.0px;height:105.60000000000002px;background:#e2e2e2"></div>
<div style="position:absolute;left:49.1px;top:671.2px;width:1.0px;height:10.799999999999955px;background:#ececec"></div>
<div style="position:absolute;left:29.3px;top:591.7px;width:920.2px;height:1.0px;background:#e9e9e9"></div>
<div style="position:absolute;left:29.3px;top:611.8px;width:920.2px;height:1.0px;background:#e9e9e9"></div>
<div style="position:absolute;left:29.3px;top:631.1px;width:920.2px;height:1.0px;background:#e9e9e9"></div>
<div style="position:absolute;left:29.3px;top:650.8px;width:920.2px;height:1.0px;background:#e9e9e9"></div>
<div style="position:absolute;left:29.3px;top:670.7px;width:920.2px;height:1.0px;background:#e9e9e9"></div>
<div style="position:absolute;left:0px;top:680px;width:967px;height:2px;background:#fff"></div>
<div style="position:absolute;left:53.50px;top:573.99px;font:400 11px/11px 'Liberation Sans', sans-serif;color:#32363a;white-space:nowrap;-webkit-text-stroke:0.12px currentColor;">Merkmal</div>
<div style="position:absolute;left:121.80px;top:573.99px;font:400 11px/11px 'Liberation Sans', sans-serif;color:#32363a;white-space:nowrap;-webkit-text-stroke:0.12px currentColor;">Zuord. Merkm. ab</div>
<div style="position:absolute;left:221.70px;top:573.99px;font:400 11px/11px 'Liberation Sans', sans-serif;color:#32363a;white-space:nowrap;-webkit-text-stroke:0.12px currentColor;">Gültig bis</div>
<div style="position:absolute;left:315.60px;top:573.99px;font:400 11px/11px 'Liberation Sans', sans-serif;color:#32363a;white-space:nowrap;-webkit-text-stroke:0.12px currentColor;">Zusatzinfo</div>
<div style="position:absolute;left:373.50px;top:573.99px;font:400 11px/11px 'Liberation Sans', sans-serif;color:#32363a;white-space:nowrap;-webkit-text-stroke:0.12px currentColor;">Beschreibung</div>
<div style="position:absolute;left:497.50px;top:573.99px;font:400 11px/11px 'Liberation Sans', sans-serif;color:#32363a;white-space:nowrap;-webkit-text-stroke:0.12px currentColor;">Merkmal</div>
<div style="position:absolute;left:335.50px;width:600px;text-align:center;top:573.99px;font:400 11px/11px 'Liberation Sans', sans-serif;color:#32363a;white-space:nowrap;-webkit-text-stroke:0.12px currentColor;">zutreffend</div>
<div style="position:absolute;left:673.00px;top:573.99px;font:400 11px/11px 'Liberation Sans', sans-serif;color:#32363a;white-space:nowrap;-webkit-text-stroke:0.12px currentColor;">Merkmal gültig ab</div>
<div style="position:absolute;left:812.20px;top:573.99px;font:400 11px/11px 'Liberation Sans', sans-serif;color:#32363a;white-space:nowrap;-webkit-text-stroke:0.12px currentColor;">Merkmal gültig bis</div>
<svg style="position:absolute;left:33.3px;top:572.8px;" width="12" height="12" viewBox="0 0 12 12"><polygon points="1.8,1.8 5,2.8 9.6,4.3 4.2,4.3 4.2,8 2.4,6" fill="#6e6e6e"/><rect x="4.6" y="4.7" width="5.6" height="4.6" fill="#fff" stroke="#8a8a8a" stroke-width="1"/></svg>
<div style="position:absolute;left:54.10px;top:596.69px;font:400 11px/11px 'Liberation Sans', sans-serif;color:#32363a;white-space:nowrap;-webkit-text-stroke:0.12px currentColor;">400106</div>
<div style="position:absolute;left:497.90px;top:596.69px;font:400 11px/11px 'Liberation Sans', sans-serif;color:#32363a;white-space:nowrap;-webkit-text-stroke:0.12px currentColor;">Internet</div>
<div style="position:absolute;left:33.1px;top:595.8000000000001px;width:12.600000000000001px;height:12.600000000000023px;border:1px solid #dcdcdc;border-left-color:#8a8f94;border-radius:2px;background:#fafafa;box-sizing:border-box"></div>
<div style="position:absolute;left:601.6px;top:592.7px;width:68.29999999999995px;height:19.100000000000023px;background:#dce9f6"></div>
<div style="position:absolute;left:601.6px;top:611.6px;width:68.29999999999995px;height:1.2000000000000455px;background:#3f7fc6"></div>
<div style="position:absolute;left:629.3px;top:595.4000000000001px;width:12.5px;height:12.599999999999909px;border:1px solid #c8c8c8;border-left-color:#7a7a7a;border-right-color:#8c8c8c;border-radius:2px;background:#fff;box-sizing:border-box"></div>
<svg style="position:absolute;left:629.3px;top:595.4000000000001px;" width="13" height="13" viewBox="0 0 13 13"><polyline points="3.3,7 6,9.3 9.5,4.2" fill="none" stroke="#0854a0" stroke-width="1.7" stroke-linejoin="miter"/></svg>
<div style="position:absolute;left:54.10px;top:616.79px;font:400 11px/11px 'Liberation Sans', sans-serif;color:#32363a;white-space:nowrap;-webkit-text-stroke:0.12px currentColor;">400701</div>
<div style="position:absolute;left:497.90px;top:616.79px;font:400 11px/11px 'Liberation Sans', sans-serif;color:#32363a;white-space:nowrap;-webkit-text-stroke:0.12px currentColor;">Parkett</div>
<div style="position:absolute;left:33.1px;top:615.9px;width:12.600000000000001px;height:12.600000000000023px;border:1px solid #dcdcdc;border-left-color:#8a8f94;border-radius:2px;background:#fafafa;box-sizing:border-box"></div>
<div style="position:absolute;left:629.3px;top:615.5px;width:12.5px;height:12.599999999999909px;border:1px solid #c8c8c8;border-left-color:#7a7a7a;border-right-color:#8c8c8c;border-radius:2px;background:#fff;box-sizing:border-box"></div>
<svg style="position:absolute;left:629.3px;top:615.5px;" width="13" height="13" viewBox="0 0 13 13"><polyline points="3.3,7 6,9.3 9.5,4.2" fill="none" stroke="#0854a0" stroke-width="1.7" stroke-linejoin="miter"/></svg>
<div style="position:absolute;left:54.10px;top:636.09px;font:400 11px/11px 'Liberation Sans', sans-serif;color:#32363a;white-space:nowrap;-webkit-text-stroke:0.12px currentColor;">400702</div>
<div style="position:absolute;left:497.90px;top:636.09px;font:400 11px/11px 'Liberation Sans', sans-serif;color:#32363a;white-space:nowrap;-webkit-text-stroke:0.12px currentColor;">Teppichboden</div>
<div style="position:absolute;left:33.1px;top:635.2px;width:12.600000000000001px;height:12.600000000000023px;border:1px solid #8a8f94;border-radius:2px;background:#fff;box-sizing:border-box"></div>
<div style="position:absolute;left:629.3px;top:634.8000000000001px;width:12.5px;height:12.599999999999909px;border:1px solid #c8c8c8;border-left-color:#7a7a7a;border-right-color:#8c8c8c;border-radius:2px;background:#fff;box-sizing:border-box"></div>
<div style="position:absolute;left:54.10px;top:655.79px;font:400 11px/11px 'Liberation Sans', sans-serif;color:#32363a;white-space:nowrap;-webkit-text-stroke:0.12px currentColor;">400703</div>
<div style="position:absolute;left:497.90px;top:655.79px;font:400 11px/11px 'Liberation Sans', sans-serif;color:#32363a;white-space:nowrap;-webkit-text-stroke:0.12px currentColor;">Dielen</div>
<div style="position:absolute;left:33.1px;top:654.9px;width:12.600000000000001px;height:12.600000000000023px;border:1px solid #8a8f94;border-radius:2px;background:#fff;box-sizing:border-box"></div>
<div style="position:absolute;left:629.3px;top:654.5px;width:12.5px;height:12.599999999999909px;border:1px solid #c8c8c8;border-left-color:#7a7a7a;border-right-color:#8c8c8c;border-radius:2px;background:#fff;box-sizing:border-box"></div></body></html>
